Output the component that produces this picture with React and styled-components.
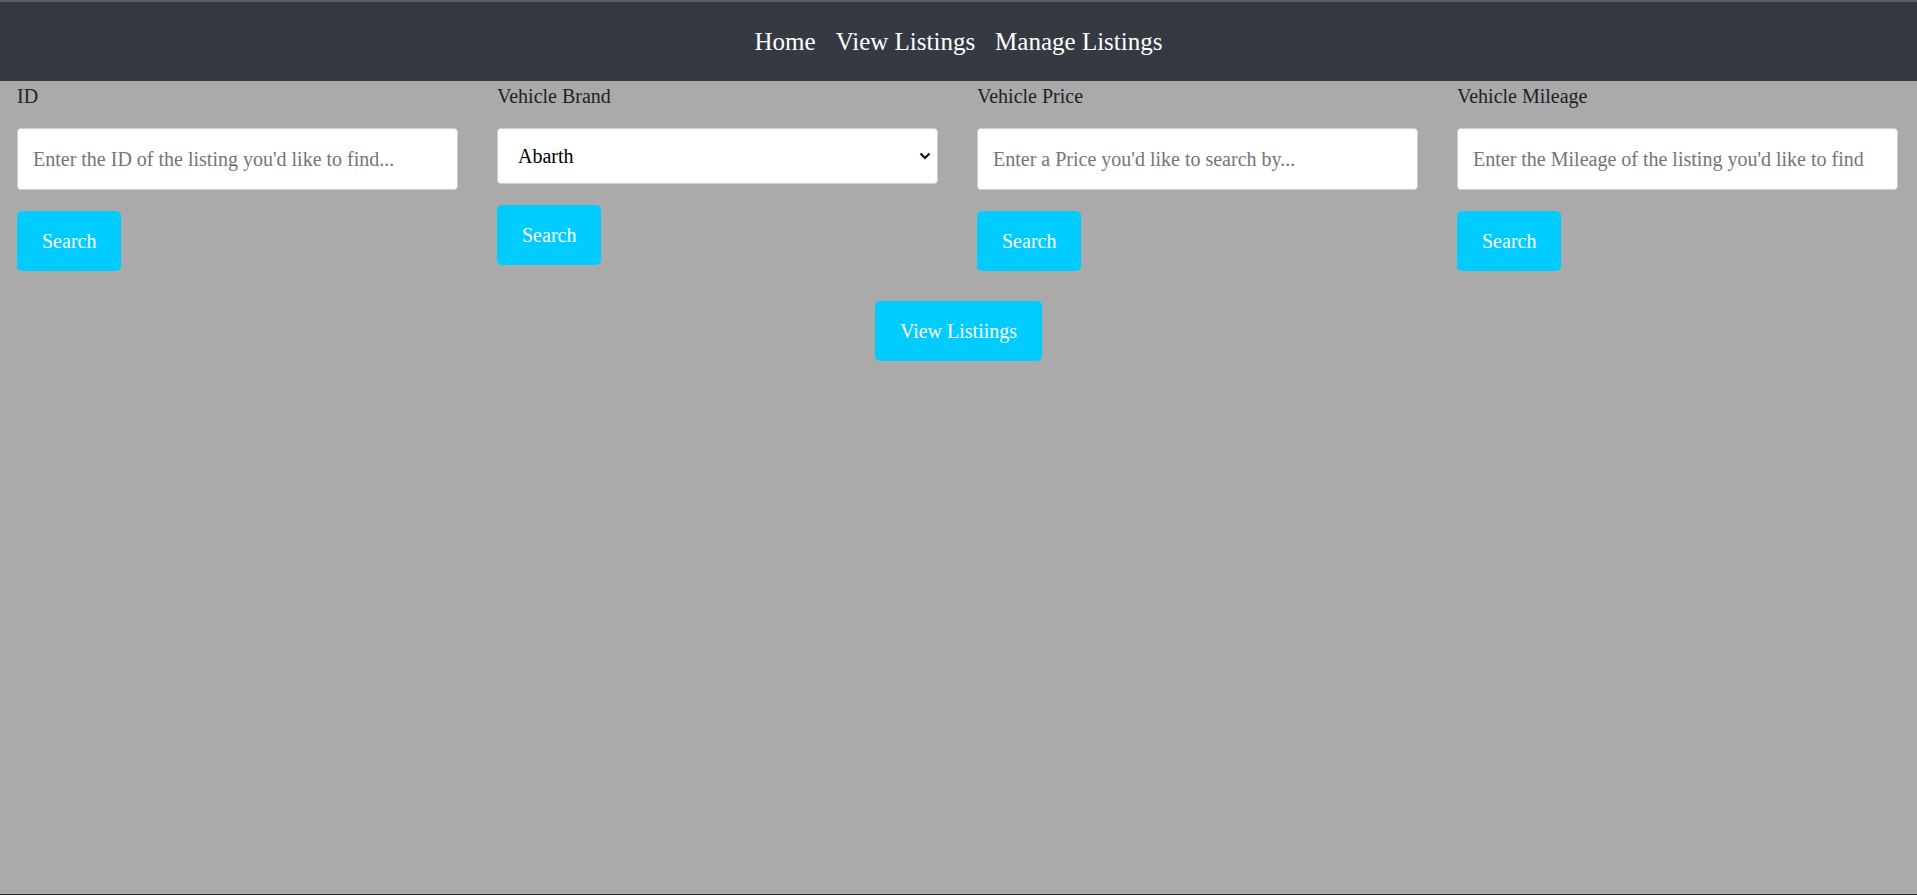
import React, { useState } from "react"
import styled, { createGlobalStyle } from "styled-components"

const GlobalStyle = createGlobalStyle`
  html, body {
    margin: 0;
    padding: 0;
    background: #aaaaaa;
    font-family: "Liberation Serif", "Times New Roman", serif;
  }
  * {
    box-sizing: border-box;
  }
`

const Page = styled.div`
  min-height: 100vh;
  border-top: 2px solid #5e5e5e;
  border-bottom: 1px solid #26262a;
  background: #aaaaaa;
`

const NavBar = styled.nav`
  height: 79px;
  background: #353a42;
  display: flex;
  align-items: center;
  justify-content: center;
  gap: 20px;
`

const NavLink = styled.a`
  color: #ffffff;
  font-size: 25px;
  text-decoration: none;
  cursor: pointer;
`

const SearchGrid = styled.div`
  display: grid;
  grid-template-columns: repeat(4, 1fr);
  column-gap: 39px;
  align-items: start;
  padding: 4px 19px 0 17px;
`

const Field = styled.div`
  display: flex;
  flex-direction: column;
  align-items: flex-start;
`

const Label = styled.label`
  font-size: 20px;
  line-height: 23px;
  color: #1f2226;
  margin-bottom: 20px;
`

const TextInput = styled.input`
  width: 100%;
  height: 62px;
  padding: 0 15px;
  border: 1px solid #cfcfcf;
  border-radius: 4px;
  background: #ffffff;
  font-family: inherit;
  font-size: 20px;
  color: #000;
  outline: none;

  &::placeholder {
    color: #757575;
  }
`

const SelectWrap = styled.div`
  position: relative;
  width: 100%;
`

const Select = styled.select`
  width: 100%;
  height: 56px;
  padding: 0 20px;
  border: 1px solid #cfcfcf;
  border-radius: 4px;
  background: #ffffff;
  font-family: inherit;
  font-size: 20px;
  color: #000;
  appearance: none;
  -webkit-appearance: none;
  outline: none;
`

const Chevron = styled.svg`
  position: absolute;
  right: 7px;
  top: 50%;
  transform: translateY(-50%);
  pointer-events: none;
`

const Button = styled.button`
  margin-top: ${(props) => props.$gap || 21}px;
  height: 60px;
  padding: 0 25px;
  border: none;
  border-radius: 5px;
  background: #00ccff;
  color: #ffffff;
  font-family: inherit;
  font-size: 20px;
  cursor: pointer;
`

const Center = styled.div`
  display: flex;
  justify-content: center;
  margin-top: 9px;
`

const brands = ["Abarth", "Alfa Romeo", "Aston Martin", "Audi", "BMW", "Ford"]

const App = () => {
  const [brand, setBrand] = useState("Abarth")

  return (
    <>
      <GlobalStyle />
      <Page>
        <NavBar>
          <NavLink>Home</NavLink>
          <NavLink>View Listings</NavLink>
          <NavLink>Manage Listings</NavLink>
        </NavBar>
        <SearchGrid>
          <Field>
            <Label>ID</Label>
            <TextInput placeholder="Enter the ID of the listing you'd like to find..." />
            <Button>Search</Button>
          </Field>
          <Field>
            <Label>Vehicle Brand</Label>
            <SelectWrap>
              <Select value={brand} onChange={(e) => setBrand(e.target.value)}>
                {brands.map((b) => (
                  <option key={b} value={b}>
                    {b}
                  </option>
                ))}
              </Select>
              <Chevron width="12" height="8" viewBox="0 0 12 8">
                <path d="M1.5 1.5 L6 6 L10.5 1.5" fill="none" stroke="#111" strokeWidth="2.2" />
              </Chevron>
            </SelectWrap>
            <Button>Search</Button>
          </Field>
          <Field>
            <Label>Vehicle Price</Label>
            <TextInput placeholder="Enter a Price you'd like to search by..." />
            <Button>Search</Button>
          </Field>
          <Field>
            <Label>Vehicle Mileage</Label>
            <TextInput placeholder="Enter the Mileage of the listing you'd like to find" />
            <Button>Search</Button>
          </Field>
        </SearchGrid>
        <Center>
          <Button $gap={21}>View Listiings</Button>
        </Center>
      </Page>
    </>
  )
}

export default App
